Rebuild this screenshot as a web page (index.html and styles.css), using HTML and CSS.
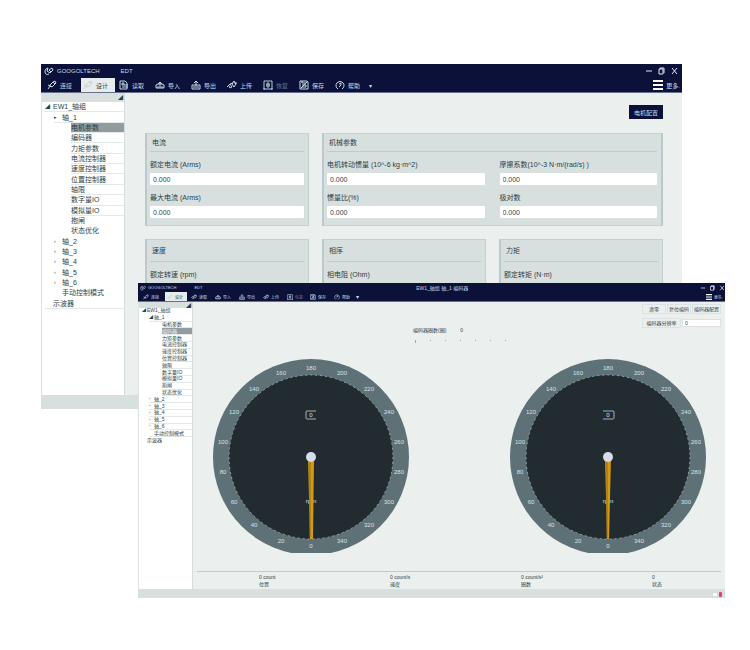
FILE: index.html
```html
<!DOCTYPE html>
<html lang="zh-CN">
<head>
<meta charset="utf-8">
<title>GOOGOLTECH EDT</title>
<link rel="stylesheet" href="styles.css">
</head>
<body>
<svg class="defs" aria-hidden="true">
  <symbol id="i-link" viewBox="0 0 10 10"><path d="M1 9l2-3 2 1 3-3-2-2-3 3 1 2M6 2l2-1 1 2-1 1M1 5l2 1"/></symbol>
  <symbol id="i-doc" viewBox="0 0 10 10"><path d="M1 1h5l2 2v6H1zM3 3h2v2H3zM3 7h6M5 5h4"/></symbol>
  <symbol id="i-in" viewBox="0 0 10 10"><path d="M1 5v3h8V5L7 4H3zM3 4l2-2 2 2M2 7h6M5 2v4"/></symbol>
  <symbol id="i-out" viewBox="0 0 10 10"><path d="M1 5v4h8V5H1M2 7h6M5 6V1M3 3l2-2 2 2"/></symbol>
  <symbol id="i-plug" viewBox="0 0 10 10"><path d="M0 7l3-3 2 3-2 1-1-2M5 4l2-3 2 3-2 3-2-3M7 3h3M3 4l3-1"/></symbol>
  <symbol id="i-box" viewBox="0 0 10 10"><path d="M1 1h8v8H1zM4 3h2v4H4zM3 5h4M0 9h2M8 9h2"/></symbol>
  <symbol id="i-save" viewBox="0 0 10 10"><path d="M1 1h7l1 1v7H1zM3 1v2h4M3 5h4v2H3M2 8l6-6"/></symbol>
  <symbol id="i-help" viewBox="0 0 10 10"><path d="M3 9A4 4 0 1 1 7 9M4 4l2-1v2L4 7"/></symbol>
  <symbol id="i-logo" viewBox="0 0 10 10"><path d="M5 8C1 10 0 5 2 3l2-1-1 3 3 2 3-3-1-2-3 2 2 2"/></symbol>
  <symbol id="i-win" viewBox="0 0 32 8"><path d="M1 4h6M14 7V2h4v5zM15 2V1h4v5M27 1l5 6M32 1l-5 6"/></symbol>
  <symbol id="i-menu" viewBox="0 0 10 10"><path d="M0 1h10M0 5h10M0 9h10"/></symbol>
</svg>

<section class="window back">
  <header class="bar">
    <div class="title">
      <svg class="icon"><use href="#i-logo"/></svg><span>GOOGOLTECH</span><span class="product">EDT</span>
      <svg class="controls"><use href="#i-win"/></svg>
    </div>
    <nav class="tools">
      <button><svg class="icon"><use href="#i-link"/></svg>连接</button>
      <button class="active"><svg class="icon"><use href="#i-link"/></svg>设计</button>
      <button><svg class="icon"><use href="#i-doc"/></svg>读取</button>
      <button><svg class="icon"><use href="#i-in"/></svg>导入</button>
      <button><svg class="icon"><use href="#i-out"/></svg>导出</button>
      <button><svg class="icon"><use href="#i-plug"/></svg>上传</button>
      <button class="dim"><svg class="icon"><use href="#i-box"/></svg>恢复</button>
      <button><svg class="icon"><use href="#i-save"/></svg>保存</button>
      <button><svg class="icon"><use href="#i-help"/></svg>帮助</button>
      <span class="caret">▾</span>
      <button class="more"><svg class="icon"><use href="#i-menu"/></svg>更多.</button>
    </nav>
  </header>
  <div class="body">
    <aside>
      <div class="pin">◢</div>
      <ul class="tree">
        <li class="root"><i>◢</i>EW1_轴组</li>
        <li class="axis"><i>▸</i>轴_1</li>
        <li class="leaf selected">电机参数</li><li class="leaf">编码器</li><li class="leaf">力矩参数</li>
        <li class="leaf">电流控制器</li><li class="leaf">速度控制器</li><li class="leaf">位置控制器</li>
        <li class="leaf">轴限</li><li class="leaf">数字量IO</li><li class="leaf">模拟量IO</li>
        <li class="leaf bare">抱闸</li><li class="leaf bare">状态优化</li>
        <li class="axis bare"><i>›</i>轴_2</li><li class="axis bare"><i>›</i>轴_3</li><li class="axis bare"><i>›</i>轴_4</li>
        <li class="axis bare"><i>›</i>轴_5</li><li class="axis bare"><i>›</i>轴_6</li>
        <li class="axis bare"><i></i>手动控制模式</li>
        <li class="root last"><i></i>示波器</li>
      </ul>
    </aside>
    <main class="settings">
      <button class="primary">电机配置</button>
      <div class="cards">
        <section class="card">
          <h2>电流</h2>
          <div class="fields">
            <label>额定电流 (Arms)<input value="0.000"></label>
            <label>最大电流 (Arms)<input value="0.000"></label>
          </div>
        </section>
        <section class="card wide">
          <h2>机械参数</h2>
          <div class="fields">
            <label>电机转动惯量 (10^-6 kg·m^2)<input value="0.000"></label>
            <label>摩擦系数(10^-3 N·m/(rad/s) )<input value="0.000"></label>
            <label>惯量比(%)<input value="0.000"></label>
            <label>极对数<input value="0.000"></label>
          </div>
        </section>
        <section class="card tall"><h2>速度</h2><div class="fields"><label>额定转速 (rpm)<input value="0.000"></label></div></section>
        <section class="card tall"><h2>相序</h2><div class="fields"><label>相电阻 (Ohm)<input value="0.000"></label></div></section>
        <section class="card tall"><h2>力矩</h2><div class="fields"><label>额定转矩 (N·m)<input value="0.000"></label></div></section>
      </div>
    </main>
  </div>
  <footer class="status"></footer>
</section>

<section class="window front">
  <header class="bar">
    <div class="title">
      <svg class="icon"><use href="#i-logo"/></svg><span>GOOGOLTECH</span><span class="product">EDT</span>
      <span class="caption">EW1_轴组 轴_1 编码器</span>
      <svg class="controls"><use href="#i-win"/></svg>
    </div>
    <nav class="tools">
      <button><svg class="icon"><use href="#i-link"/></svg>连接</button>
      <button class="active"><svg class="icon"><use href="#i-link"/></svg>设计</button>
      <button><svg class="icon"><use href="#i-plug"/></svg>读取</button>
      <button><svg class="icon"><use href="#i-in"/></svg>导入</button>
      <button><svg class="icon"><use href="#i-out"/></svg>导出</button>
      <button><svg class="icon"><use href="#i-plug"/></svg>上传</button>
      <button class="dim"><svg class="icon"><use href="#i-box"/></svg>恢复</button>
      <button><svg class="icon"><use href="#i-save"/></svg>保存</button>
      <button><svg class="icon"><use href="#i-help"/></svg>帮助</button>
      <span class="caret">▾</span>
      <button class="more"><svg class="icon"><use href="#i-menu"/></svg>更多.</button>
    </nav>
  </header>
  <div class="body">
    <aside>
      <div class="pin">◢</div>
      <ul class="tree">
        <li class="root bare"><i>◢</i>EW1_轴组</li>
        <li class="axis"><i>◢</i>轴_1</li>
        <li class="leaf">电机参数</li><li class="leaf selected">编码器</li><li class="leaf">力矩参数</li>
        <li class="leaf">电流控制器</li><li class="leaf">速度控制器</li><li class="leaf">位置控制器</li>
        <li class="leaf">轴限</li><li class="leaf">数字量IO</li><li class="leaf">模拟量IO</li>
        <li class="leaf">抱闸</li><li class="leaf">状态优化</li>
        <li class="axis"><i>›</i>轴_2</li><li class="axis"><i>›</i>轴_3</li><li class="axis"><i>›</i>轴_4</li>
        <li class="axis"><i>›</i>轴_5</li><li class="axis"><i>›</i>轴_6</li>
        <li class="axis"><i></i>手动控制模式</li>
        <li class="root bare"><i></i>示波器</li>
      </ul>
    </aside>
    <main class="monitor">
      <div class="top">
        <div class="scale">
          <div class="scale-label"><span>编码器圈数(圈)</span><span>0</span></div>
          <div class="dots"><i></i><i></i><i></i><i></i><i></i><i></i><i></i></div>
        </div>
        <div class="actions">
          <button>清零</button><button>复位编码</button><button>编码器配置</button>
          <label for="res">编码器分辨率</label><input id="res" value="0">
        </div>
      </div>
      <div class="dials">
        <svg viewBox="-98 -99 196 195">
          <circle class="ring" r="98"/><circle class="face" r="82"/><circle class="edge" r="82"/>
          <g class="marks">
            <text x="0" y="91">0</text><text x="-30" y="86">20</text><text x="-57" y="70">40</text>
            <text x="-77" y="47">60</text><text x="-88" y="17">80</text><text x="-88" y="-13">100</text>
            <text x="-77" y="-43">120</text><text x="-57" y="-66">140</text><text x="-30" y="-82">160</text>
            <text x="0" y="-87">180</text><text x="31" y="-82">200</text><text x="58" y="-66">220</text>
            <text x="78" y="-43">240</text><text x="88" y="-13">260</text><text x="88" y="17">280</text>
            <text x="78" y="47">300</text><text x="58" y="70">320</text><text x="31" y="86">340</text>
          </g>
          <path class="readout" d="M5-46h-9q-1 0-1 1v6q0 1 1 1h9"/>
          <text class="value" x="0" y="-40">0</text>
          <text class="value" x="0" y="46">rpm</text>
          <path class="needle" d="M-3 0h6L2 82h-3z"/><path class="needle-line" d="M-1 3V80"/>
          <circle class="hub" r="5"/>
        </svg>
        <svg viewBox="-98 -99 196 195">
          <circle class="ring" r="98"/><circle class="face" r="82"/><circle class="edge" r="82"/>
          <g class="marks">
            <text x="0" y="91">0</text><text x="-30" y="86">20</text><text x="-57" y="70">40</text>
            <text x="-77" y="47">60</text><text x="-88" y="17">80</text><text x="-88" y="-13">100</text>
            <text x="-77" y="-43">120</text><text x="-57" y="-66">140</text><text x="-30" y="-82">160</text>
            <text x="0" y="-87">180</text><text x="31" y="-82">200</text><text x="58" y="-66">220</text>
            <text x="78" y="-43">240</text><text x="88" y="-13">260</text><text x="88" y="17">280</text>
            <text x="78" y="47">300</text><text x="58" y="70">320</text><text x="31" y="86">340</text>
          </g>
          <path class="readout" d="M-5-46h10q1 0 1 1v6q0 1-1 1h-10"/>
          <text class="value" x="0" y="-40">0</text>
          <text class="value" x="0" y="46">rpm</text>
          <path class="needle" d="M-3 0h6L1 82h-2z"/><path class="needle-line" d="M-1 3V80"/>
          <circle class="hub" r="5"/>
        </svg>
      </div>
      <div class="readings">
        <div><span>0 count</span><b>位置</b></div>
        <div><span>0 count/s</span><b>速度</b></div>
        <div><span>0 count/s²</span><b>圈数</b></div>
        <div><span>0</span><b>状态</b></div>
      </div>
    </main>
  </div>
  <footer class="status"><span class="mail"></span><span class="alert"></span></footer>
</section>
</body>
</html>
```
FILE: styles.css
```css
* { box-sizing: border-box; }
body {
  margin: 0;
  min-height: 100vh;
  position: relative;
  background: #fff;
  color: #2c3f45;
  font-family: "Liberation Sans", "Noto Sans CJK SC", sans-serif;
}
button, input { font: inherit; color: inherit; margin: 0; padding: 0; border: 0; background: none; }
i { font-style: normal; }
.defs { position: absolute; width: 0; height: 0; }

/* Windows */
.window { position: absolute; display: flex; flex-direction: column; overflow: hidden; background: #ebefee; }
.back { inset: 64px 68px 241px 41px; font-size: 7px; }
.front { inset: 283px 25px 52px 138px; font-size: 5px; }
.bar { background: #0c1139; color: #c5dce6; font-size: 6px; flex: none; border-bottom: 1px solid #69708b; }
.title, .tools { display: flex; align-items: center; }
.title { height: 14px; padding: 0 4px 0 3px; gap: 3px; }
.tools { height: 14px; padding-left: 4px; }
.product { margin-left: 18px; }
.icon { width: 10px; height: 10px; flex: none; fill: none; stroke: currentColor; stroke-width: 1; }
.controls { width: 34px; height: 8px; margin-left: auto; fill: none; stroke: #dfe8ef; }
.tools button { display: flex; align-items: center; gap: 3px; width: 36px; height: 14px; padding-left: 2px; white-space: nowrap; }
.tools .active { background: #e7ecec; color: #2c3f45; width: 34px; margin-right: 2px; }
.active .icon { opacity: .15; }
.tools .dim { color: #66788c; }
.dim .icon { stroke: #b5cbd7; }
.caret { font-size: 6px; }
.tools .more { margin-left: auto; width: auto; padding-right: 2px; }
.more .icon { stroke: #fff; stroke-width: 2; }
.body { display: flex; flex: 1; min-height: 0; }
.status { height: 14px; flex: none; background: #d8e0df; }

/* Navigation tree */
aside { width: 84px; flex: none; background: #fff; border-left: 1px solid #dce3e2; border-right: 1px solid #d5dddc; }
.pin { height: 9px; line-height: 9px; text-align: right; font-size: 5px; background: #d8e0df; padding-right: 1px; }
.tree { list-style: none; margin: 0; padding: 0; display: grid; grid-auto-rows: 1fr; height: 207px; }
.tree li { display: flex; align-items: center; line-height: 1; white-space: nowrap; min-height: 0; border-bottom: 1px solid #e3e9e8; }
.tree .bare { border-color: transparent; }
.tree i { width: 8px; flex: none; font-size: 5px; }
.tree .root { margin-left: 3px; }
.tree .axis { margin-left: 12px; }
.tree .leaf { margin-left: 29px; }
.tree .selected { background: #929c9f; }

/* Settings form */
.settings { flex: 1; min-width: 0; padding: 12px 19px 0 20px; overflow: hidden; }
.primary { display: block; margin: 0 0 14px auto; width: 34px; height: 14px; background: #0c1139; color: #c5dce6; font-size: 6px; }
.cards { display: grid; grid-template-columns: repeat(3, 1fr); gap: 13px; }
.card { background: #d8e0df; border: 1px solid #c6d0d1; border-left: 2px solid #bac9cb; padding: 0 4px 7px 3px; min-width: 0; }
.wide { grid-column: span 2; border-right: 2px solid #bac9cb; }
.card h2 { margin: 0; height: 18px; line-height: 17px; padding-left: 2px; font-size: 7px; font-weight: 400; border-bottom: 1px solid #bdcccd; }
.tall h2 { height: 22px; line-height: 21px; }
.fields { display: grid; gap: 0 15px; }
.wide .fields { grid-template-columns: 1fr 1fr; }
.fields label { display: block; line-height: 9px; padding-top: 8px; white-space: nowrap; }
.fields input { display: block; width: 100%; height: 12px; margin: 4px 0 0; padding: 0 3px; background: #fff; border-radius: 1px; font-size: 7px; }

/* Monitor window */
.front .bar { font-size: 4px; }
.front .title, .front .tools, .front .tools button { height: 9px; }
.front .title { padding: 0 1px 0 2px; gap: 2px; }
.front .tools { padding-left: 3px; }
.front .product { margin-left: 16px; }
.front .icon { width: 6px; height: 6px; }
.front .controls { width: 24px; height: 6px; }
.caption { flex: 1; text-align: center; font-size: 5px; padding-right: 18px; }
.front .tools button { width: 24px; gap: 2px; }
.front .tools .active { width: 22px; }
.front .tools .dim { width: 23px; }
.front .tools .more { width: auto; }
.front aside { width: 55px; }
.front .pin { height: 6px; line-height: 6px; }
.front .tree { height: 136px; }
.front .tree i { width: 5px; font-size: 4px; }
.front .tree .root { margin-left: 3px; }
.front .tree .axis { margin-left: 10px; }
.front .tree .leaf { margin-left: 23px; }
.front .selected { color: #eef2f2; }
.front .status { height: 9px; display: flex; justify-content: flex-end; align-items: flex-end; gap: 1px; padding: 0 3px 1px; }
.mail { width: 6px; height: 5px; background: #fff; border: 1px solid #d3dcdd; }
.alert { width: 3px; height: 5px; background: #e23d82; border-radius: 1px; }
.monitor { flex: 1; min-width: 0; display: flex; flex-direction: column; padding: 2px 4px 0; }
.top { display: flex; justify-content: space-between; height: 54px; flex: none; }
.scale { margin: 23px 0 0 216px; }
.scale-label { display: flex; gap: 14px; line-height: 7px; }
.dots { display: flex; gap: 14px; padding: 6px 0 0 2px; }
.dots i { width: 1px; height: 1px; background: #9cabaf; }
.dots i:first-child { height: 3px; }
.actions { display: grid; grid-template-columns: 24px 14px 9px 29px; gap: 4px 1px; align-content: start; }
.actions button, .actions label { height: 10px; line-height: 9px; white-space: nowrap; text-align: center; border: 1px solid #dbe2e1; }
.actions button:nth-child(2) { grid-column: 2 / 4; }
.actions label { grid-column: 1 / 3; }
.actions input { grid-column: 3 / 5; width: 100%; height: 8px; background: #fff; border: 1px solid #dbe2e1; padding-left: 2px; align-self: center; }
.dials { display: flex; justify-content: space-between; padding: 0 15px 0 16px; height: 195px; }
.dials svg { width: 196px; height: 195px; }
.ring { fill: #5e7177; }
.face { fill: #222b30; }
.edge { fill: none; stroke: #93a4a9; stroke-width: 1; stroke-dasharray: 2 3; }
.marks, .value { font-size: 6px; fill: #d5e1e5; text-anchor: middle; }
.readout { fill: none; stroke: #a5b3b8; }
.needle { fill: #d49a13; }
.needle-line { stroke: #8d6c18; fill: none; }
.hub { fill: #d6dcea; }
.readings { display: grid; grid-template-columns: repeat(4, 1fr); margin-top: auto; height: 18px; padding-top: 2px; border-top: 1px solid #bdcccd; }
.readings div { padding-left: 62px; display: flex; flex-direction: column; line-height: 7px; white-space: nowrap; }
.readings b { font-weight: 400; }
```
